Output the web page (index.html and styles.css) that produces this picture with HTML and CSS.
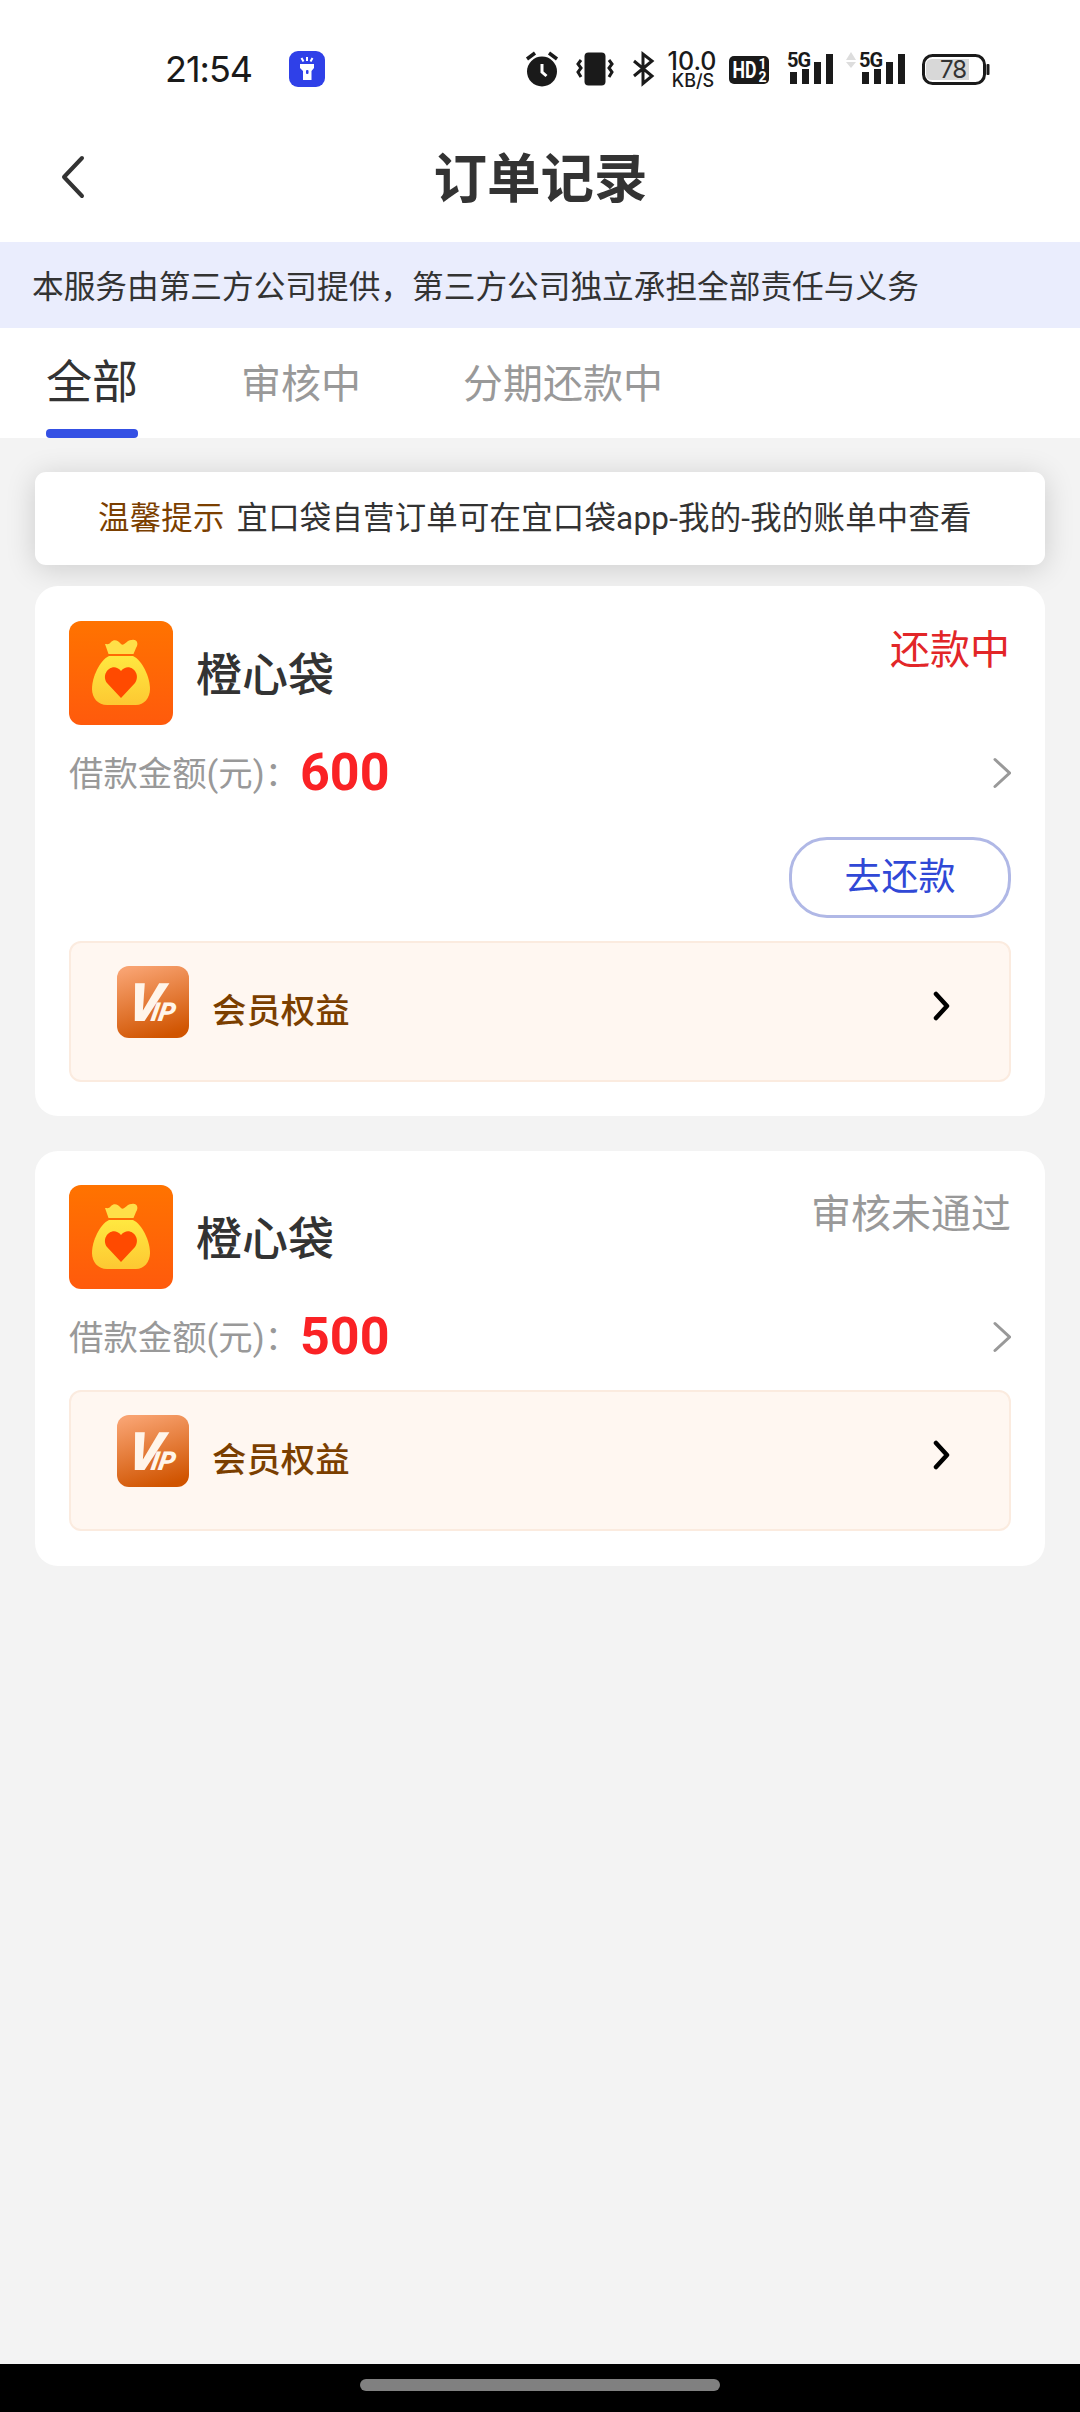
FILE: index.html
```html
<!DOCTYPE html>
<html lang="zh-CN">
<head>
<meta charset="utf-8">
<title>订单记录</title>
<link rel="stylesheet" href="styles.css">
</head>
<body>
<svg width="0" height="0" class="defs">
  <defs>
    <linearGradient id="orange" x1="0" y1="0" x2="0" y2="1"><stop offset="0" stop-color="#ff7300"/><stop offset="1" stop-color="#ff5a0c"/></linearGradient>
    <linearGradient id="gold" x1="0" y1="0" x2="0" y2="1"><stop offset="0" stop-color="#ffe840"/><stop offset="1" stop-color="#fdc832"/></linearGradient>
    <linearGradient id="copper" x1="0.3" y1="0" x2="0.6" y2="1"><stop offset="0" stop-color="#f8a270"/><stop offset="1" stop-color="#d05400"/></linearGradient>
    <symbol id="bag" viewBox="0 0 104 104">
      <rect width="104" height="104" rx="12" fill="url(#orange)"/>
      <path d="M36 23C38 23 40 24 42 21C45 18 49 19 52 23C55 26 58 18 63 19C68 18 70 23 67 27L64.500 33H39.500Z" fill="#ffdf48"/>
      <path d="M40 35H64C73 39 81 56 81 68C81 77 75 84 67 84H38C29 84 23 77 23 68C23 56 31 39 40 35Z" fill="url(#gold)"/>
      <path d="M52 77L38 62C31 52 44 40 52 50C60 40 73 52 66 62Z" fill="#ff4a00"/>
    </symbol>
    <symbol id="vip-tile" viewBox="0 0 72 72"><rect width="72" height="72" rx="12" fill="url(#copper)"/></symbol>
  </defs>
</svg>
<header class="status">
  <span class="clock">21:54</span>
  <svg class="torch" viewBox="0 0 36 36"><rect width="36" height="36" rx="9" fill="#2f40e8"/><path d="M11 13H25V17L22.500 20V29H14V20L11 17Z" fill="#fff"/><path d="M12.500 7L14.500 10.500M18 6V10M23.500 7L21.500 10.500" stroke="#fff" stroke-width="2"/><rect x="17" y="19" width="2.500" height="4" rx="1" fill="#2f40e8"/></svg>
  <svg class="indicators" viewBox="0 0 500 44" fill="#1a1a1a">
    <circle cx="18" cy="24.500" r="15"/><path d="M3 12L11 6M25 6L33 12" stroke="#1a1a1a" stroke-width="3.500"/><path d="M18 17V25L22.500 29" fill="none" stroke="#fff" stroke-width="3"/>
    <rect x="60.500" y="5.500" width="21" height="33" rx="4"/><path d="M57 13L54 17L57 21L54 25L57 30M85 13L88 17L85 21L88 25L85 30" fill="none" stroke="#1a1a1a" stroke-width="3"/>
    <path d="M110 14L128 29L119 36.500V7L128 14L110 29" fill="none" stroke="#1a1a1a" stroke-width="3"/>
    <text x="168" y="23" class="speed">10.0</text><text x="169" y="39.500" class="unit">KB/S</text>
    <rect x="205" y="9" width="40" height="28" rx="5"/><text x="208.500" y="31" class="hd" textLength="24" lengthAdjust="spacingAndGlyphs">HD</text><text x="238.500" y="22" class="sim">1</text><text x="238.500" y="34.500" class="sim">2</text>
    <text x="263" y="20" class="net">5G</text><path d="M266 25h7v12h-7zM278 22h7v15h-7zM290 15h7v22h-7zM302 7h7v30h-7z"/>
    <path d="M322 13L327 5L332 13ZM322 15L327 21L332 15Z" fill="#ddd"/>
    <text x="335" y="20" class="net">5G</text><path d="M338 25h7v12h-7zM350 22h7v15h-7zM362 15h7v22h-7zM374 7h7v30h-7z"/>
    <rect x="399.500" y="8.500" width="61" height="28" rx="9" fill="#fff" stroke="#1a1a1a" stroke-width="3"/><path d="M408 12H445V33H408Q402 33 402 27V18Q402 12 408 12Z" fill="#d8d8d8"/><rect x="462.500" y="17" width="3" height="11" rx="1"/><text x="429" y="31" class="battery">78</text>
  </svg>
</header>
<nav class="titlebar">
  <svg class="back" viewBox="0 0 28 46"><path d="M23 4L5 23L23 42" fill="none" stroke="#333" stroke-width="4" stroke-linecap="round" stroke-linejoin="round"/></svg>
  <h1>订单记录</h1>
</nav>
<p class="disclaimer">本服务由第三方公司提供，第三方公司独立承担全部责任与义务</p>
<div class="tabs"><span class="tab active">全部</span><span class="tab">审核中</span><span class="tab">分期还款中</span></div>
<main>
  <div class="tip"><b>温馨提示</b><span>宜口袋自营订单可在宜口袋app-我的-我的账单中查看</span></div>
  <section class="card">
    <div class="head"><svg class="logo"><use href="#bag"/></svg><h2>橙心袋</h2><span class="state due">还款中</span></div>
    <div class="amount"><span class="label">借款金额(元)：</span><strong>600</strong><svg class="more" viewBox="0 0 20 32"><path d="M4 2.500L18.500 16L4 29.500" fill="none" stroke="#999" stroke-width="3" stroke-linecap="round"/></svg></div>
    <div class="actions"><button>去还款</button></div>
    <div class="member"><svg class="vip" viewBox="0 0 72 72"><use href="#vip-tile"/><text transform="translate(8 55) skewX(-10)" class="v">V<tspan dx="-9" class="ip">IP</tspan></text></svg><span>会员权益</span><svg class="go" viewBox="0 0 18 30"><path d="M4 3L15 15L4 27" fill="none" stroke="#000" stroke-width="4.500" stroke-linecap="round" stroke-linejoin="round"/></svg></div>
  </section>
  <section class="card rejected">
    <div class="head"><svg class="logo"><use href="#bag"/></svg><h2>橙心袋</h2><span class="state">审核未通过</span></div>
    <div class="amount"><span class="label">借款金额(元)：</span><strong>500</strong><svg class="more" viewBox="0 0 20 32"><path d="M4 2.500L18.500 16L4 29.500" fill="none" stroke="#999" stroke-width="3" stroke-linecap="round"/></svg></div>
    <div class="member"><svg class="vip" viewBox="0 0 72 72"><use href="#vip-tile"/><text transform="translate(8 55) skewX(-10)" class="v">V<tspan dx="-9" class="ip">IP</tspan></text></svg><span>会员权益</span><svg class="go" viewBox="0 0 18 30"><path d="M4 3L15 15L4 27" fill="none" stroke="#000" stroke-width="4.500" stroke-linecap="round" stroke-linejoin="round"/></svg></div>
  </section>
</main>
<footer class="gesture"><i></i></footer>
</body>
</html>
```
FILE: styles.css
```css
* { box-sizing: border-box; margin: 0; padding: 0; }
body { width: 1080px; height: 2412px; display: flex; flex-direction: column; background: #f3f3f3; color: #333; font-family: Roboto, "Noto Sans CJK SC", sans-serif; overflow: hidden; }
.defs { position: absolute; }
svg { flex: none; }
.status { height: 112px; background: #fff; display: flex; padding: 0 0 0 165px; }
.clock { width: 124px; margin-top: 47px; font: 36px/45px Inter, sans-serif; letter-spacing: -1px; color: #1a1a1a; }
.torch { width: 36px; height: 36px; margin-top: 51px; }
.indicators { width: 500px; height: 44px; margin: 47px 0 0 199px; font-family: Inter, sans-serif; }
.speed { font-size: 25px; font-weight: 500; text-anchor: middle; }
.unit { font-size: 18px; font-weight: 500; text-anchor: middle; }
.hd { font: bold 23px Roboto, sans-serif; fill: #fff; }
.sim { font: bold 14px Roboto, sans-serif; fill: #fff; text-anchor: middle; }
.net { font: bold 20px Roboto, sans-serif; letter-spacing: -1px; }
.battery { font-size: 24px; letter-spacing: -1px; fill: #333; text-anchor: middle; }
.titlebar { height: 130px; background: #fff; display: grid; grid-template-columns: 180px 1fr 180px; align-items: center; }
.back { width: 28px; height: 46px; margin: 0 0 0 59px; }
h1 { padding: 5px 0 0 1px; text-align: center; font-size: 53.500px; line-height: 80px; font-weight: 700; }
.disclaimer { height: 86px; padding-left: 32px; background: #eaedfd; font-size: 31.680px; line-height: 91px; white-space: nowrap; }
.tabs { height: 110px; background: #fff; display: flex; padding-left: 46px; }
.tab { height: 110px; margin-right: 102px; line-height: 113px; font-size: 40px; color: #999; white-space: nowrap; }
.active { width: 92px; font-size: 46px; line-height: 109px; color: #333; margin-right: 103px; }
.active::after { content: ""; display: block; height: 9px; margin-top: -8px; border-radius: 4px; background: #3450e4; }
main { flex: 1; padding: 34px 35px 0; }
.tip { height: 93px; margin-bottom: 21px; padding: 0 63px; border-radius: 11px; background: #fff; box-shadow: 0 4px 30px rgba(0, 0, 0, .16); display: flex; gap: 12px; font-size: 31.400px; letter-spacing: .24px; line-height: 93px; white-space: nowrap; }
.tip b { font-weight: 400; color: #7b3f00; }
.card { margin-bottom: 35px; padding: 35px 34px 34px; border-radius: 23px; background: #fff; }
.rejected { padding: 34px 34px 35px; }
.head { height: 104px; display: flex; }
.logo { width: 104px; height: 104px; }
h2 { margin-left: 23px; font-size: 46px; line-height: 108px; font-weight: 500; }
.state { margin-left: auto; font-size: 40px; line-height: 59px; color: #999; }
.due { padding-right: 1px; color: #e22628; }
.amount { height: 96px; display: flex; align-items: center; font-size: 34.400px; color: #999; }
.rejected .amount { margin-bottom: 5px; }
.label { width: 231px; padding-bottom: 5px; white-space: nowrap; }
strong { padding-bottom: 2px; font: bold 52px Roboto, sans-serif; color: #fa2225; }
.more { width: 20px; height: 32px; margin-left: auto; }
.actions { display: flex; justify-content: flex-end; height: 120px; padding-top: 16px; }
button { width: 222px; height: 81px; border: 3px solid #b0b8e6; border-radius: 38px; background: #fff; color: #3048d6; font: 37px/75px Roboto, "Noto Sans CJK SC", sans-serif; }
.member { height: 141px; padding: 23px 59px 0 46px; display: flex; border: 2px solid #fbebdf; border-radius: 12px; background: #fff7f1; color: #7b3f00; font-size: 34.400px; font-weight: 500; line-height: 90px; }
.member span { margin-left: 23px; }
.vip { width: 72px; height: 72px; }
.v { font: italic 900 53px Roboto, sans-serif; fill: #fff5ea; }
.ip { font-size: 26px; }
.go { width: 18px; height: 30px; margin: 25px 0 0 auto; }
.gesture { height: 48px; padding-top: 15px; background: #000; display: flex; justify-content: center; }
.gesture i { width: 360px; height: 12px; border-radius: 6px; background: #808080; }
```
